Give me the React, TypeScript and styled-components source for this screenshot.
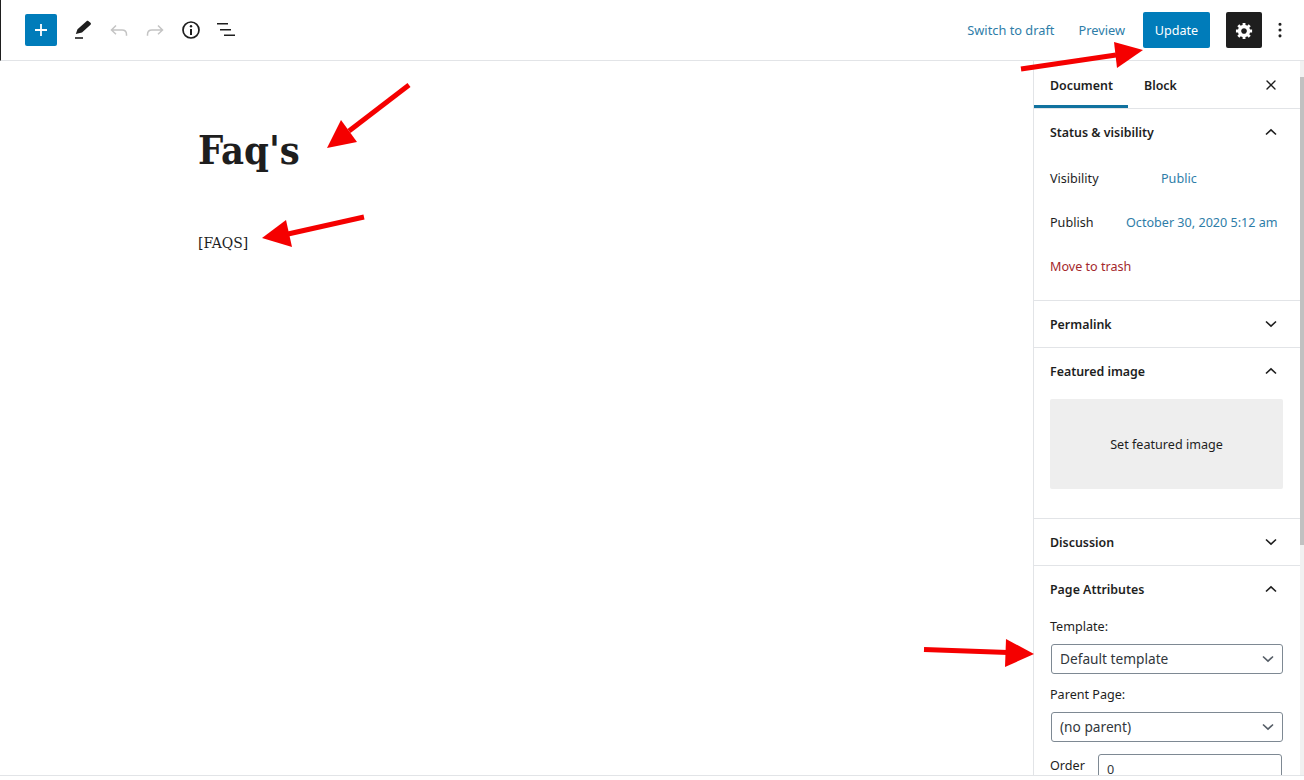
import styled, { createGlobalStyle } from "styled-components";
import { MoreVertical, X } from "lucide-react";

const GlobalStyle = createGlobalStyle`
  html, body {
    margin: 0;
    padding: 0;
    height: 100%;
    overflow: hidden;
    background: #fff;
  }
  body {
    font-family: "Noto Sans", "Open Sans", sans-serif;
    font-size: 12.6px;
    color: #1e1e1e;
  }
`;

const SECTION_ROWS = [
  { label: "Visibility", value: "Public", indent: 111 },
  { label: "Publish", value: "October 30, 2020 5:12 am", indent: 76 },
];

const Chevron = ({ up, select }: { up?: boolean; select?: boolean }) => (
  <svg width="12" height="8" viewBox="0 0 12 8" fill="none">
    <path
      d={up ? "M1 6.500L6 1.800L11 6.500" : "M1 1.500L6 6.200L11 1.500"}
      stroke={select ? "#555d66" : "#1e1e1e"}
      strokeWidth="1.6"
    />
  </svg>
);

const App = () => {
  return (
    <Page>
      <GlobalStyle />
      <TopBar>
        <LeftTools>
          <AddButton aria-label="Add block">
            <svg width="16" height="16" viewBox="0 0 16 16">
              <path d="M8 2v12M2 8h12" stroke="#fff" strokeWidth="1.8" />
            </svg>
          </AddButton>
          <ToolIcon>
            <svg width="24" height="24" viewBox="0 0 24 24">
              <path d="M5.800 16l1.700-4.700 9-8c.5-.5 1.200-.6 1.800-.2l2.200 1.700c.6.600.6 1.300 0 1.900l-8.500 7.900-6.200 1.300z" fill="#1e1e1e" />
              <path d="M5 20h8" stroke="#1e1e1e" strokeWidth="1.600" />
            </svg>
          </ToolIcon>
          <ToolIcon>
            <svg width="24" height="24" viewBox="0 0 24 24" fill="none">
              <path d="M10 7.500L5.500 12 10 16.200M6 12h10c3 0 4.500 2 4.500 4.500v1.200" stroke="#c4c4c4" strokeWidth="1.500" />
            </svg>
          </ToolIcon>
          <ToolIcon>
            <svg width="24" height="24" viewBox="0 0 24 24" fill="none">
              <path d="M16 7.500l4.500 4.500-4.500 4.200M20 12H10c-3 0-4.500 2-4.500 4.500v1.200" stroke="#c4c4c4" strokeWidth="1.500" />
            </svg>
          </ToolIcon>
          <ToolIcon>
            <svg width="24" height="24" viewBox="0 0 24 24" fill="none">
              <circle cx="13" cy="12" r="8" stroke="#1e1e1e" strokeWidth="1.700" />
              <path d="M13 11v6" stroke="#1e1e1e" strokeWidth="2" />
              <circle cx="13" cy="8.200" r="1.200" fill="#1e1e1e" />
            </svg>
          </ToolIcon>
          <ToolIcon>
            <svg width="24" height="24" viewBox="0 0 24 24" fill="none">
              <path d="M3 5.700h11M6 11.700h11M10 17.300h11" stroke="#1e1e1e" strokeWidth="1.600" />
            </svg>
          </ToolIcon>
        </LeftTools>
        <RightTools>
          <TextLink>Switch to draft</TextLink>
          <TextLink>Preview</TextLink>
          <UpdateButton>Update</UpdateButton>
          <SettingsButton aria-label="Settings">
            <svg width="19" height="19" viewBox="0 0 20 20">
              <path
                fillRule="evenodd"
                d="M18 12h-2.180c-.17.7-.44 1.350-.81 1.930l1.540 1.540-2.100 2.100-1.540-1.540c-.58.36-1.230.63-1.910.79V19H8v-2.180c-.68-.16-1.330-.43-1.910-.79l-1.540 1.540-2.120-2.120 1.540-1.540c-.36-.58-.63-1.230-.79-1.910H1V9.030h2.170c.16-.7.44-1.350.8-1.940L2.430 5.550l2.100-2.100 1.540 1.540c.58-.37 1.240-.64 1.930-.81V2h3v2.180c.68.16 1.330.43 1.910.79l1.540-1.540 2.120 2.120-1.540 1.540c.36.59.64 1.240.8 1.940H18V12zm-8.500 1.500c1.660 0 3-1.340 3-3s-1.340-3-3-3-3 1.340-3 3 1.340 3 3 3z"
                fill="#fff"
              />
            </svg>
          </SettingsButton>
          <MoreButton aria-label="More">
            <MoreVertical size={20} strokeWidth={1.7} />
          </MoreButton>
        </RightTools>
      </TopBar>

      <Body>
        <Editor>
          <PageTitle>Faq's</PageTitle>
          <Shortcode>[FAQS]</Shortcode>
        </Editor>

        <Sidebar>
          <Tabs>
            <Tab $active>Document</Tab>
            <Tab>Block</Tab>
            <CloseIcon>
              <X size={16} strokeWidth={2} />
            </CloseIcon>
          </Tabs>

          <Section>
            <SectionHead>
              <SectionTitle>Status &amp; visibility</SectionTitle>
              <Chevron up />
            </SectionHead>
            <StatusBody>
              {SECTION_ROWS.map((row) => (
                <StatusRow key={row.label}>
                  <RowLabel $width={row.indent}>{row.label}</RowLabel>
                  <RowValue>{row.value}</RowValue>
                </StatusRow>
              ))}
              <TrashRow>Move to trash</TrashRow>
            </StatusBody>
          </Section>

          <Section>
            <SectionHead>
              <SectionTitle>Permalink</SectionTitle>
              <Chevron />
            </SectionHead>
          </Section>

          <Section>
            <SectionHead>
              <SectionTitle>Featured image</SectionTitle>
              <Chevron up />
            </SectionHead>
            <FeaturedBody>
              <FeaturedButton>Set featured image</FeaturedButton>
            </FeaturedBody>
          </Section>

          <Section>
            <SectionHead>
              <SectionTitle>Discussion</SectionTitle>
              <Chevron />
            </SectionHead>
          </Section>

          <Section>
            <SectionHead>
              <SectionTitle>Page Attributes</SectionTitle>
              <Chevron up />
            </SectionHead>
            <AttributesBody>
              <FieldLabel>Template:</FieldLabel>
              <SelectBox>
                Default template
                <Chevron select />
              </SelectBox>
              <FieldLabel>Parent Page:</FieldLabel>
              <SelectBox>
                (no parent)
                <Chevron select />
              </SelectBox>
              <OrderRow>
                <OrderLabel>Order</OrderLabel>
                <OrderInput>0</OrderInput>
              </OrderRow>
            </AttributesBody>
          </Section>
        </Sidebar>
        <ScrollTrack>
          <ScrollThumb />
        </ScrollTrack>
      </Body>
      <BottomEdge />

      <Arrows width="1304" height="780" viewBox="0 0 1304 780">
        <g fill="#f50000">
          <path d="M1021 69L1116 55" stroke="#f50000" strokeWidth="5" />
          <path d="M1114 42L1143 50L1117 68z" />
          <path d="M409 85L349 131" stroke="#f50000" strokeWidth="5" />
          <path d="M341 120L327 148L357 142z" />
          <path d="M364 217L288 234" stroke="#f50000" strokeWidth="5" />
          <path d="M286 220L262 238L292 247z" />
          <path d="M924 649.500L1008 652.500" stroke="#f50000" strokeWidth="5" />
          <path d="M1006 639L1034 654L1005 667z" />
        </g>
      </Arrows>
    </Page>
  );
};

export default App;

const Page = styled.div`
  position: relative;
  width: 1304px;
  height: 780px;
  overflow: hidden;
  display: flex;
  flex-direction: column;
  background: #fff;
`;

const TopBar = styled.header`
  height: 60px;
  flex: none;
  display: flex;
  align-items: center;
  justify-content: space-between;
  border-left: 1px solid #1e1e1e;
  border-bottom: 1px solid #e2e4e7;
  padding: 0 14px 0 24px;
`;

const LeftTools = styled.div`
  display: flex;
  align-items: center;
  gap: 12px;
`;

const AddButton = styled.button`
  width: 32px;
  height: 32px;
  padding: 0;
  border: 0;
  border-radius: 2px;
  background: #007cba;
  display: flex;
  align-items: center;
  justify-content: center;
  margin-right: 1px;
`;

const ToolIcon = styled.span`
  width: 24px;
  height: 24px;
  display: flex;
`;

const RightTools = styled.div`
  display: flex;
  align-items: center;
`;

const TextLink = styled.span`
  color: #2e7da8;
  font-size: 12.8px;
  margin-right: 24px;
`;

const UpdateButton = styled.button`
  width: 67px;
  height: 36px;
  padding: 0;
  border: 0;
  border-radius: 2px;
  background: #007cba;
  color: #fff;
  font: inherit;
  margin-left: -6px;
`;

const SettingsButton = styled.button`
  width: 36px;
  height: 36px;
  padding: 0;
  border: 0;
  border-radius: 2px;
  background: #1e1e1e;
  margin-left: 16px;
  display: flex;
  align-items: center;
  justify-content: center;
`;

const MoreButton = styled.span`
  display: flex;
  margin-left: 8px;
`;

const Body = styled.div`
  flex: 1;
  min-height: 0;
  display: flex;
`;

const Editor = styled.main`
  flex: 1;
  padding: 65px 0 0 198px;
`;

const PageTitle = styled.h1`
  margin: 0;
  font-family: "DejaVu Serif Condensed", "DejaVu Serif", serif;
  font-stretch: condensed;
  font-size: 39.5px;
  font-weight: 700;
  line-height: 48px;
  color: #1e1e1e;
`;

const Shortcode = styled.p`
  margin: 55px 0 0;
  font-family: "DejaVu Serif Condensed", "DejaVu Serif", serif;
  font-stretch: condensed;
  font-size: 15.5px;
  line-height: 28px;
  color: #1e1e1e;
`;

const Sidebar = styled.aside`
  width: 266px;
  flex: none;
  height: 720px;
  overflow: hidden;
  border-left: 1px solid #e2e4e7;
`;

const Tabs = styled.div`
  height: 47px;
  display: flex;
  align-items: stretch;
  border-bottom: 1px solid #e2e4e7;
`;

const Tab = styled.div<{ $active?: boolean }>`
  display: flex;
  align-items: center;
  padding: 1px 16px 0;
  font-size: 12.4px;
  font-weight: 600;
  width: ${(p) => (p.$active ? "94px" : "auto")};
  box-sizing: border-box;
  box-shadow: ${(p) => (p.$active ? "inset 0 -3px 0 #11729f" : "none")};
`;

const CloseIcon = styled.span`
  margin-left: auto;
  padding-right: 21px;
  display: flex;
  align-items: center;
`;

const Section = styled.section`
  border-bottom: 1px solid #e2e4e7;
`;

const SectionHead = styled.div`
  height: 46px;
  padding: 0 23px 0 16px;
  display: flex;
  align-items: center;
  justify-content: space-between;
`;

const SectionTitle = styled.h2`
  margin: 0;
  font-size: 12.4px;
  font-weight: 600;
`;

const StatusBody = styled.div`
  padding: 1px 16px 12px;
`;

const StatusRow = styled.div`
  height: 44px;
  display: flex;
  align-items: center;
`;

const RowLabel = styled.span<{ $width: number }>`
  width: ${(p) => p.$width}px;
  flex: none;
`;

const RowValue = styled.span`
  color: #2e7da8;
  white-space: nowrap;
`;

const TrashRow = styled.div`
  height: 44px;
  display: flex;
  align-items: center;
  color: #a4282c;
`;

const FeaturedBody = styled.div`
  padding: 5px 17px 29px 16px;
`;

const FeaturedButton = styled.div`
  height: 90px;
  border-radius: 2px;
  background: #eeeeee;
  display: flex;
  align-items: center;
  justify-content: center;
`;

const AttributesBody = styled.div`
  padding: 5px 17px 0 16px;
`;

const FieldLabel = styled.div`
  line-height: 18px;
  padding-top: 1px;
  margin-bottom: 8px;
`;

const SelectBox = styled.div`
  height: 28px;
  margin: 0 0 11px 1px;
  padding: 0 8px;
  border: 1px solid #7e8993;
  border-radius: 3px;
  display: flex;
  align-items: center;
  justify-content: space-between;
  color: #32373c;
  font-size: 13.7px;
  line-height: 26px;
`;

const OrderRow = styled.div`
  display: flex;
  padding-top: 1px;
`;

const OrderLabel = styled.div`
  width: 48px;
  flex: none;
  line-height: 18px;
  padding-top: 3px;
`;

const OrderInput = styled.div`
  width: 166px;
  height: 28px;
  padding: 0 8px;
  border: 1px solid #7e8993;
  border-radius: 3px;
  display: flex;
  align-items: center;
  color: #32373c;
`;

const ScrollTrack = styled.div`
  width: 4px;
  flex: none;
  padding-top: 16px;
  background: #f1f1f1;
`;

const ScrollThumb = styled.div`
  height: 468px;
  background: #c1c1c1;
`;

const BottomEdge = styled.div`
  height: 4px;
  flex: none;
  border-top: 1px solid #e2e4e7;
  background: #fff;
`;

const Arrows = styled.svg`
  position: absolute;
  inset: 0;
  pointer-events: none;
`;
